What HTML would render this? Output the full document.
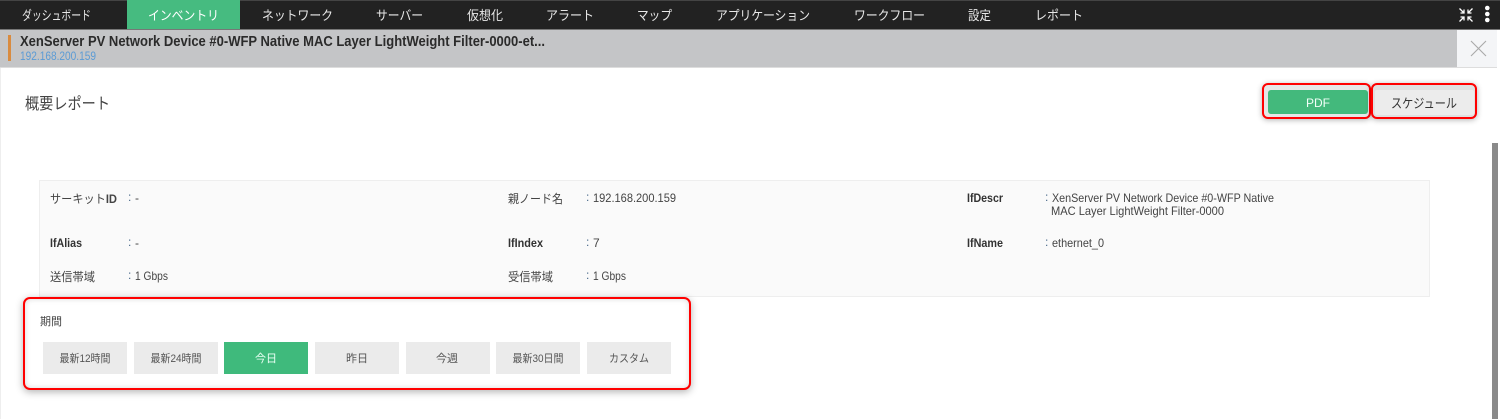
<!DOCTYPE html>
<html lang="ja">
<head>
<meta charset="utf-8">
<title>概要レポート</title>
<style>
html,body{margin:0;padding:0;width:1500px;height:419px;overflow:hidden;background:#fff}
.b{position:absolute;box-sizing:border-box}
svg{position:absolute;left:0;top:0}
text{font-family:"Liberation Sans","Noto Sans CJK JP",sans-serif}
.nav{font-size:13px;fill:#e8e8e8}
.lb{font-size:12px;fill:#444}
.lbb{font-size:12px;font-weight:bold;fill:#333}
.v{font-size:12px;fill:#444}
.c{font-size:12px;fill:#4a6a8a}
.p{font-size:11px;fill:#555;text-anchor:middle}
</style>
</head>
<body>
<div class="b" style="left:0;top:0;width:1500px;height:30px;background:#222;border-top:1px solid #444;border-bottom:1px solid #777"></div>
<div class="b" style="left:127px;top:0;width:113px;height:29px;background:#46bb80"></div>
<div class="b" style="left:0;top:30px;width:1457px;height:38px;background:#c4c5c7;border-bottom:1px solid #ddd"></div>
<div class="b" style="left:8px;top:35px;width:3px;height:26px;background:#d98b3f"></div>
<div class="b" style="left:1457px;top:30px;width:40px;height:38px;background:#f4f5f7;border-bottom:1px solid #ddd"></div>
<div class="b" style="left:0;top:68px;width:1px;height:351px;background:#eee"></div>
<div class="b" style="left:1492px;top:143px;width:6px;height:276px;background:#8a8a8a"></div>

<div class="b" style="left:1262px;top:83px;width:109px;height:36px;border:2px solid #f00;border-radius:6px;background:#e6e6e6;box-shadow:0 1px 6px rgba(0,0,0,.3)"></div>
<div class="b" style="left:1268px;top:90px;width:100px;height:24px;border-radius:3px;background:#43b97c"></div>
<div class="b" style="left:1371px;top:83px;width:106px;height:36px;border:2px solid #f00;border-radius:6px;background:#e0e0e0;box-shadow:0 1px 6px rgba(0,0,0,.3)"></div>
<div class="b" style="left:1375px;top:90px;width:99px;height:25px;border-radius:2px;background:#ececec"></div>

<div class="b" style="left:39px;top:180px;width:1391px;height:117px;background:#fafafa;border:1px solid #eee"></div>

<div class="b" style="left:23px;top:297px;width:668px;height:93px;background:#fff;border:2px solid #f00;border-radius:7px;box-shadow:0 2px 8px rgba(0,0,0,.3),inset 0 0 6px rgba(0,0,0,.15)"></div>
<div class="b" style="left:43px;top:342px;width:84px;height:32px;background:#ebebeb"></div>
<div class="b" style="left:134px;top:342px;width:84px;height:32px;background:#ebebeb"></div>
<div class="b" style="left:224px;top:342px;width:84px;height:32px;background:#3fba7c"></div>
<div class="b" style="left:315px;top:342px;width:84px;height:32px;background:#ebebeb"></div>
<div class="b" style="left:406px;top:342px;width:84px;height:32px;background:#ebebeb"></div>
<div class="b" style="left:496px;top:342px;width:84px;height:32px;background:#ebebeb"></div>
<div class="b" style="left:587px;top:342px;width:84px;height:32px;background:#ebebeb"></div>

<svg width="1500" height="419" viewBox="0 0 1500 419" xmlns="http://www.w3.org/2000/svg">
<text class="nav" x="22" y="20" textLength="69" lengthAdjust="spacingAndGlyphs">ダッシュボード</text>
<text class="nav" x="148" y="20" textLength="71" lengthAdjust="spacingAndGlyphs" style="fill:#fff">インベントリ</text>
<text class="nav" x="262" y="20" textLength="71" lengthAdjust="spacingAndGlyphs">ネットワーク</text>
<text class="nav" x="376" y="20" textLength="47" lengthAdjust="spacingAndGlyphs">サーバー</text>
<text class="nav" x="467" y="20" textLength="36" lengthAdjust="spacingAndGlyphs">仮想化</text>
<text class="nav" x="546" y="20" textLength="48" lengthAdjust="spacingAndGlyphs">アラート</text>
<text class="nav" x="637" y="20" textLength="35" lengthAdjust="spacingAndGlyphs">マップ</text>
<text class="nav" x="716" y="20" textLength="94" lengthAdjust="spacingAndGlyphs">アプリケーション</text>
<text class="nav" x="854" y="20" textLength="71" lengthAdjust="spacingAndGlyphs">ワークフロー</text>
<text class="nav" x="968" y="20" textLength="23" lengthAdjust="spacingAndGlyphs">設定</text>
<text class="nav" x="1035" y="20" textLength="48" lengthAdjust="spacingAndGlyphs">レポート</text>

<g fill="none" stroke="#fff" stroke-width="1.3">
<path d="M1459.500 8.500l4.500 4.500M1464 9.500v3.500h-3.500M1472.500 8.500l-4.500 4.500M1468 9.500v3.500h3.500M1459.500 21.500l4.500-4.500M1464 20.500v-3.500h-3.500M1472.500 21.500l-4.500-4.500M1468 20.500v-3.500h3.500"/>
</g>
<g fill="#fff"><circle cx="1487.300" cy="8" r="2.3"/><circle cx="1487.300" cy="14" r="2.3"/><circle cx="1487.300" cy="20" r="2.3"/></g>

<text x="20" y="46" font-size="14.500" font-weight="bold" fill="#2b2b2b" textLength="525" lengthAdjust="spacingAndGlyphs">XenServer PV Network Device #0-WFP Native MAC Layer LightWeight Filter-0000-et...</text>
<text x="20" y="60" font-size="11.500" fill="#5b9bd5" textLength="76" lengthAdjust="spacingAndGlyphs">192.168.200.159</text>
<path d="M1471 41l15 15M1486 41l-15 15" stroke="#a9a9a9" stroke-width="1.1" fill="none"/>

<text x="25" y="109" font-size="16" fill="#444" textLength="85" lengthAdjust="spacingAndGlyphs">概要レポート</text>
<text x="1318" y="107" font-size="12" fill="#f2fff8" text-anchor="middle">PDF</text>
<text x="1391" y="108" font-size="13" fill="#333" textLength="66" lengthAdjust="spacingAndGlyphs">スケジュール</text>

<text class="lb" x="50" y="203" textLength="67" lengthAdjust="spacingAndGlyphs">サーキット<tspan font-weight="bold">ID</tspan></text>
<text class="c" x="128" y="201">:</text><text class="v" x="135" y="202">-</text>
<text class="lb" x="508" y="203" textLength="55" lengthAdjust="spacingAndGlyphs">親ノード名</text>
<text class="c" x="586" y="201">:</text>
<text class="v" x="593" y="202" textLength="83" lengthAdjust="spacingAndGlyphs">192.168.200.159</text>
<text class="lbb" x="967" y="202" textLength="36" lengthAdjust="spacingAndGlyphs">IfDescr</text>
<text class="c" x="1045" y="201">:</text>
<text class="v" x="1052" y="202" textLength="222" lengthAdjust="spacingAndGlyphs">XenServer PV Network Device #0-WFP Native</text>
<text class="v" x="1051" y="215" textLength="173" lengthAdjust="spacingAndGlyphs">MAC Layer LightWeight Filter-0000</text>

<text class="lbb" x="50" y="247" textLength="32" lengthAdjust="spacingAndGlyphs">IfAlias</text>
<text class="c" x="128" y="246">:</text><text class="v" x="135" y="247">-</text>
<text class="lbb" x="508" y="247" textLength="35" lengthAdjust="spacingAndGlyphs">IfIndex</text>
<text class="c" x="586" y="246">:</text><text class="v" x="593" y="247">7</text>
<text class="lbb" x="967" y="247" textLength="36" lengthAdjust="spacingAndGlyphs">IfName</text>
<text class="c" x="1045" y="246">:</text>
<text class="v" x="1052" y="247" textLength="52" lengthAdjust="spacingAndGlyphs">ethernet_0</text>

<text class="lb" x="50" y="281" textLength="45" lengthAdjust="spacingAndGlyphs">送信帯域</text>
<text class="c" x="128" y="279">:</text>
<text class="v" x="135" y="280" textLength="33" lengthAdjust="spacingAndGlyphs">1 Gbps</text>
<text class="lb" x="508" y="281" textLength="45" lengthAdjust="spacingAndGlyphs">受信帯域</text>
<text class="c" x="586" y="279">:</text>
<text class="v" x="593" y="280" textLength="33" lengthAdjust="spacingAndGlyphs">1 Gbps</text>

<text x="40" y="325" font-size="11" fill="#444">期間</text>
<text class="p" x="85" y="362" textLength="51" lengthAdjust="spacingAndGlyphs">最新12時間</text>
<text class="p" x="176" y="362" textLength="51" lengthAdjust="spacingAndGlyphs">最新24時間</text>
<text class="p" x="266" y="362" style="fill:#e9fff3">今日</text>
<text class="p" x="357" y="362">昨日</text>
<text class="p" x="447" y="362">今週</text>
<text class="p" x="538" y="362" textLength="51" lengthAdjust="spacingAndGlyphs">最新30日間</text>
<text class="p" x="629" y="362" textLength="40" lengthAdjust="spacingAndGlyphs">カスタム</text>
</svg>
</body>
</html>
